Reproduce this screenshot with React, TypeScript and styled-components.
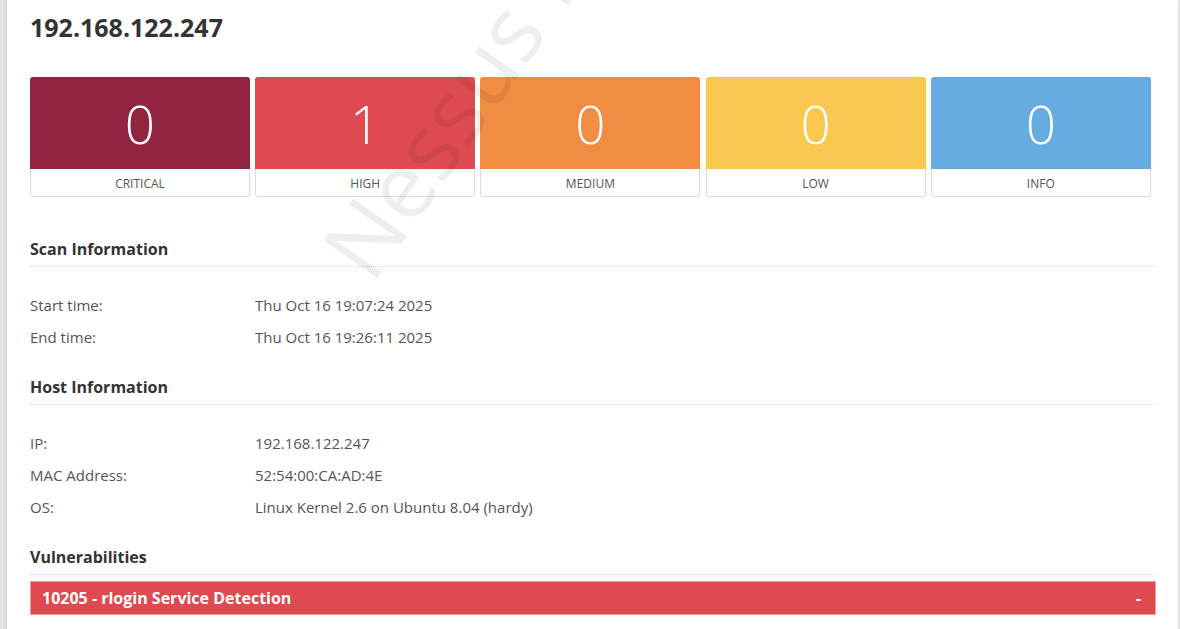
import React from "react";
import styled, { createGlobalStyle } from "styled-components";

const GlobalStyle = createGlobalStyle`
  html, body {
    margin: 0;
    padding: 0;
    background: #e4e4e4;
    font-family: "Open Sans", "Noto Sans", "Liberation Sans", sans-serif;
    overflow: hidden;
  }
`;

const Page = styled.div`
  display: flex;
  min-height: 629px;
  padding-left: 7px;
  padding-right: 2px;
`;

const Panel = styled.main`
  position: relative;
  flex: 1;
  background: #fff;
  padding: 12px 22px 20px 23px;
  overflow: hidden;
  box-shadow: -1px 0 3px rgba(0, 0, 0, 0.08);
`;

const Title = styled.h1`
  margin: 0;
  font-size: 25px;
  line-height: 30px;
  font-weight: 700;
  color: #333;
`;

const Cards = styled.div`
  display: grid;
  grid-template-columns: repeat(5, 1fr);
  margin-top: 35px;
`;

const Card = styled.div`
  margin-right: 5.2px;
  display: flex;
  flex-direction: column;
`;

const CardCount = styled.div<{ $bg: string }>`
  height: 92px;
  background: ${(p) => p.$bg};
  border-radius: 3px 3px 0 0;
  color: #fff;
  font-size: 53px;
  font-weight: 300;
  display: flex;
  align-items: center;
  justify-content: center;
  line-height: 1;
`;

const CardLabel = styled.div`
  height: 27px;
  border: 1px solid #dcdcdc;
  border-top: none;
  border-radius: 0 0 3px 3px;
  display: flex;
  align-items: center;
  justify-content: center;
  padding-top: 1px;
  box-sizing: border-box;
  height: 28px;
  font-size: 12px;
  color: #555;
  text-transform: uppercase;
`;

const SectionHeading = styled.h2<{ $gap: number }>`
  margin: ${(p) => p.$gap}px 0 0;
  font-size: 16px;
  line-height: 20px;
  font-weight: 700;
  color: #333;
  padding-bottom: 7px;
  border-bottom: 1px dotted #d8d8d8;
`;

const InfoTable = styled.div`
  display: grid;
  grid-template-columns: 225px 1fr;
  grid-auto-rows: 32px;
  margin-top: 22px;
  font-size: 15px;
  color: #555;
  align-items: center;
`;

const VulnBar = styled.div`
  margin-top: 6px;
  height: 32px;
  background: #dd4b50;
  border: 1px solid #f09a9c;
  display: flex;
  align-items: center;
  justify-content: space-between;
  padding: 0 14px 0 11px;
  color: #fff;
  font-size: 16px;
  font-weight: 700;
`;

const Watermark = styled.div`
  position: absolute;
  left: 366px;
  top: 204px;
  font-size: 92px;
  line-height: 1;
  font-weight: 400;
  white-space: nowrap;
  color: rgba(0, 0, 0, 0.065);
  transform-origin: 0 82px;
  transform: rotate(-55deg);
  pointer-events: none;
`;

const severities = [
  { label: "Critical", count: 0, bg: "#91243e" },
  { label: "High", count: 1, bg: "#dd4b50" },
  { label: "Medium", count: 0, bg: "#f18c43" },
  { label: "Low", count: 0, bg: "#f8c851" },
  { label: "Info", count: 0, bg: "#67ace1" },
];

export default function App() {
  return (
    <>
      <GlobalStyle />
      <Page>
        <Panel>
          <Title>192.168.122.247</Title>
          <Cards>
            {severities.map((s) => (
              <Card key={s.label}>
                <CardCount $bg={s.bg}>{s.count}</CardCount>
                <CardLabel>{s.label}</CardLabel>
              </Card>
            ))}
          </Cards>

          <SectionHeading $gap={42}>Scan Information</SectionHeading>
          <InfoTable>
            <span>Start time:</span>
            <span>Thu Oct 16 19:07:24 2025</span>
            <span>End time:</span>
            <span>Thu Oct 16 19:26:11 2025</span>
          </InfoTable>

          <SectionHeading $gap={24}>Host Information</SectionHeading>
          <InfoTable>
            <span>IP:</span>
            <span>192.168.122.247</span>
            <span>MAC Address:</span>
            <span>52:54:00:CA:AD:4E</span>
            <span>OS:</span>
            <span>Linux Kernel 2.6 on Ubuntu 8.04 (hardy)</span>
          </InfoTable>

          <SectionHeading $gap={24}>Vulnerabilities</SectionHeading>
          <VulnBar>
            <span>10205 - rlogin Service Detection</span>
            <span>-</span>
          </VulnBar>

          <Watermark>Nessus Essentials</Watermark>
        </Panel>
      </Page>
    </>
  );
}
